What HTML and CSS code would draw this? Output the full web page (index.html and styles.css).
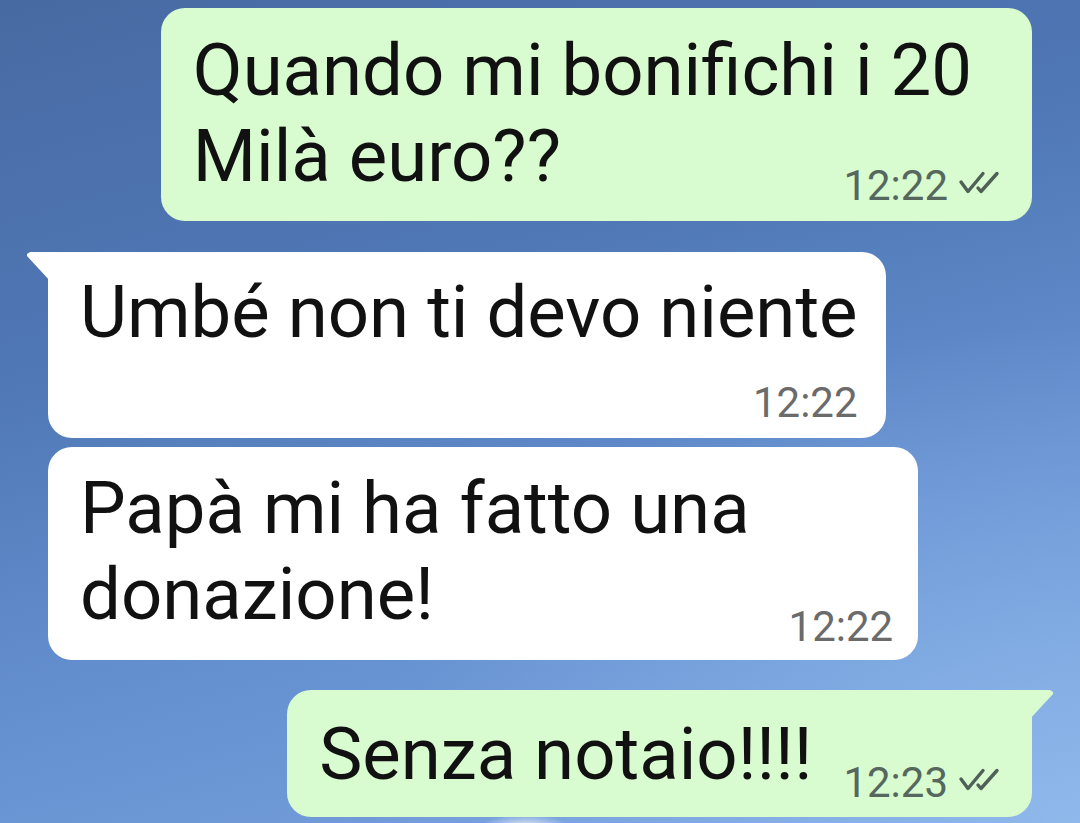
FILE: index.html
```html
<!DOCTYPE html>
<html lang="it">
<head>
<meta charset="utf-8">
<title>Chat</title>
<link rel="stylesheet" href="styles.css">
</head>
<body>
<div class="chat">
  <div class="bubble out b1">
    <div class="text">Quando mi bonifichi i 20<br>Milà euro??</div>
    <div class="meta"><span class="time">12:22</span><svg class="ticks" viewBox="0 0 42 24" width="42" height="24"><path d="M3 11 L10 20.5 L25 2.5"/><path d="M20 17 L23 20.5 L39 2.5"/></svg></div>
  </div>
  <div class="bubble in tail-left b2">
    <div class="text">Umbé non ti devo niente</div>
    <div class="meta"><span class="time">12:22</span></div>
  </div>
  <div class="bubble in b3">
    <div class="text">Papà mi ha fatto una<br>donazione!</div>
    <div class="meta"><span class="time">12:22</span></div>
  </div>
  <div class="bubble out tail-right b4">
    <div class="text">Senza notaio!!!!</div>
    <div class="meta"><span class="time">12:23</span><svg class="ticks" viewBox="0 0 42 24" width="42" height="24"><path d="M3 11 L10 20.5 L25 2.5"/><path d="M20 17 L23 20.5 L39 2.5"/></svg></div>
  </div>
</div>
</body>
</html>
```
FILE: styles.css
```css
html, body {
  margin: 0;
  padding: 0;
}
body {
  width: 1080px;
  height: 823px;
  overflow: hidden;
  background:
    radial-gradient(ellipse 45px 14px at 525px 828px, rgba(255,255,255,0.85), rgba(255,255,255,0) 100%),
    radial-gradient(ellipse 700px 500px at 1080px 823px, rgba(160,200,245,0.55), rgba(160,200,245,0) 100%),
    linear-gradient(165deg, #486aa3 0%, #5078b6 35%, #6590d0 65%, #7ba6e0 100%);
  font-family: Roboto, "Noto Sans", "Liberation Sans", sans-serif;
}
.chat {
  display: flex;
  flex-direction: column;
  padding: 8px 48px 0;
}
.bubble {
  position: relative;
  border-radius: 24px;
  font-size: 72.5px;
  line-height: 86px;
  color: #111111;
  box-sizing: border-box;
}
.out {
  background: #d8fbd0;
  align-self: flex-end;
}
.in {
  background: #ffffff;
  align-self: flex-start;
}
.text {
  white-space: nowrap;
}
.meta {
  display: flex;
  align-items: center;
  font-size: 42px;
  line-height: 50px;
  white-space: nowrap;
}
.out .meta { color: #56675d; }
.in .meta { color: #6b6b6b; }
.ticks {
  margin-left: 10px;
  margin-top: -6px;
  fill: none;
  stroke: #4f6156;
  stroke-width: 3.4;
  stroke-linecap: round;
  stroke-linejoin: round;
}

/* bubble 1: timestamp shares the last line's cell */
.b1 {
  display: grid;
  padding: 20px 32px 10px 32px;
}
.b1 .text,
.b1 .meta {
  grid-area: 1 / 1;
}
.b1 .text {
  padding-right: 28px;
  padding-bottom: 11px;
}
.b1 .meta {
  justify-self: end;
  align-self: end;
}

/* bubble 2: timestamp on its own row */
.b2 {
  display: flex;
  flex-direction: column;
  margin-top: 31px;
  padding: 18px 28px 10px 32px;
}
.b2 .meta {
  align-self: flex-end;
  margin-top: 22px;
}

/* bubble 3 */
.b3 {
  display: flex;
  align-items: flex-end;
  gap: 39px;
  margin-top: 9px;
  padding: 19px 25px 8px 32px;
}
.b3 .text { margin-bottom: 14px; }

/* bubble 4 */
.b4 {
  display: flex;
  align-items: flex-end;
  gap: 31px;
  margin-top: 30px;
  padding: 22px 32px 9px 32px;
}
.b4 .text { margin-bottom: 10px; }

/* tails */
.tail-left { border-top-left-radius: 0; }
.tail-left::before {
  content: "";
  position: absolute;
  top: 0;
  left: -21px;
  width: 24px;
  height: 30px;
  background: #ffffff;
  clip-path: polygon(3px 0, 100% 0, 100% 100%, 0 4px, 0 2px);
}
.tail-right { border-top-right-radius: 0; }
.tail-right::before {
  content: "";
  position: absolute;
  top: 0;
  right: -21px;
  width: 24px;
  height: 30px;
  background: #d8fbd0;
  clip-path: polygon(0 0, calc(100% - 3px) 0, 100% 2px, 100% 4px, 0 100%);
}
```
